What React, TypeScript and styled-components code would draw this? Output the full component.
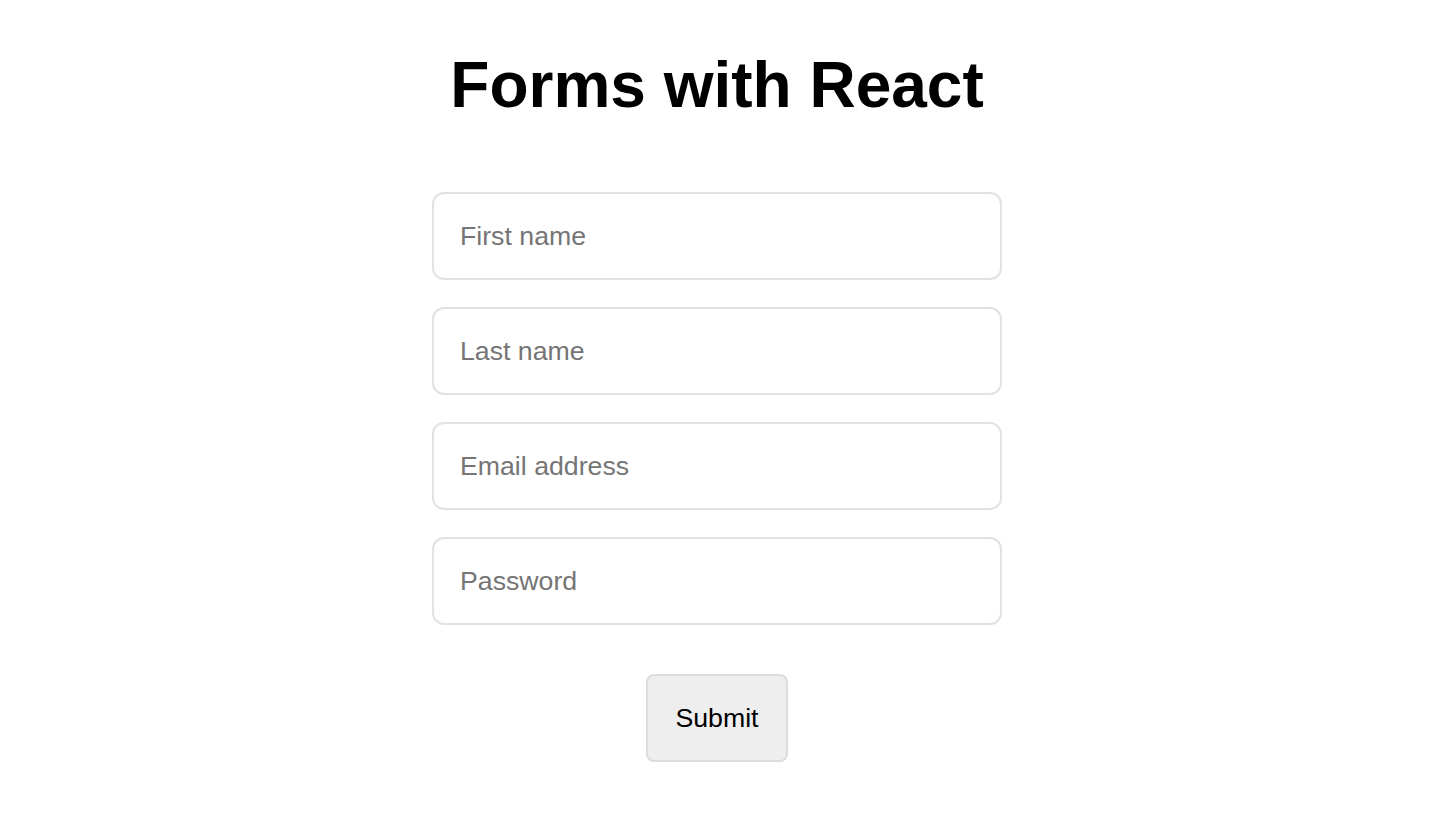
import React from "react";
import styled, { createGlobalStyle } from "styled-components";

const GlobalStyle = createGlobalStyle`
  html, body { margin: 0; padding: 0; background: #ffffff; }
  body { font-family: "Liberation Sans", Arial, Helvetica, sans-serif; color: #000; }
`;

const Page = styled.main`
  display: flex;
  flex-direction: column;
  align-items: center;
  padding: 48px 0 0 4px;
`;

const Title = styled.h1`
  margin: 0 0 70px;
  font-size: 64px;
  font-weight: 700;
  line-height: 74px;
  text-align: center;
`;

const Form = styled.form`
  display: flex;
  flex-direction: column;
  align-items: center;
  gap: 27px;
  width: 570px;
`;

const Field = styled.input`
  box-sizing: border-box;
  width: 100%;
  height: 88px;
  padding: 0 26px;
  border: 2px solid #e2e2e2;
  border-radius: 12px;
  font-family: "Liberation Sans", Arial, sans-serif;
  font-size: 26.7px;
  color: #000;
  background: #fff;
  outline: none;
  &::placeholder { color: #757575; opacity: 1; }
`;

const SubmitButton = styled.button`
  box-sizing: border-box;
  margin-top: 22px;
  height: 88px;
  padding: 0 27px;
  border: 2px solid #dddddd;
  border-radius: 8px;
  background: #eeeeee;
  font-family: "Liberation Sans", Arial, sans-serif;
  font-size: 26.7px;
  color: #000;
  cursor: pointer;
`;

export default function App() {
  return (
    <>
      <GlobalStyle />
      <Page>
        <Title>Forms with React</Title>
        <Form onSubmit={(e) => e.preventDefault()}>
          <Field type="text" placeholder="First name" />
          <Field type="text" placeholder="Last name" />
          <Field type="email" placeholder="Email address" />
          <Field type="password" placeholder="Password" />
          <SubmitButton type="submit">Submit</SubmitButton>
        </Form>
      </Page>
    </>
  );
}
